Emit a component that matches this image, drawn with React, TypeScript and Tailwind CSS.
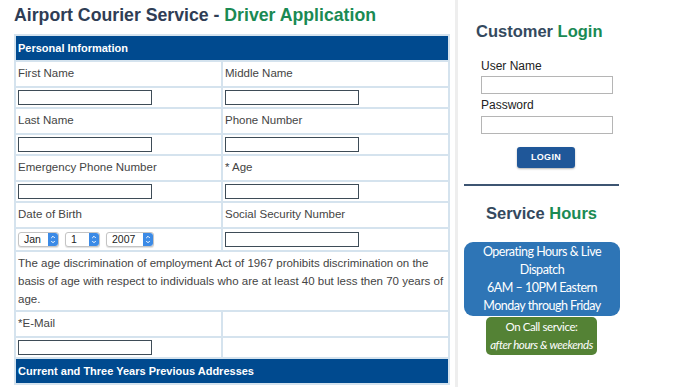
import { ChevronDown, ChevronUp } from 'lucide-react';

const cell = 'border-2 border-[#d5e3ee] px-[2px] align-middle';

function TextBox() {
  return <div className="w-[134px] h-[15px] border border-[#3e4c57] bg-white" />;
}

function Select({ value, width }: { value: string; width: string }) {
  return (
    <div className={`${width} h-[15px] flex items-center border border-[#c4c4c4] rounded-[3px] bg-white shadow-[0_1px_1px_rgba(0,0,0,0.12)]`}>
      <span className="flex-1 pl-[5px] text-[10.5px] leading-none text-[#222]">{value}</span>
      <span className="w-[10px] h-full rounded-r-[3px] bg-[#3b8ae6] flex flex-col items-center justify-center text-white">
        <ChevronUp size={6} strokeWidth={4} className="-mb-[1px]" />
        <ChevronDown size={6} strokeWidth={4} />
      </span>
    </div>
  );
}

function LabelRow({ left, right }: { left: string; right: string }) {
  return (
    <tr className="h-[26px]">
      <td className={cell}>{left}</td>
      <td className={cell}>{right}</td>
    </tr>
  );
}

function InputRow({ right = true }: { right?: boolean }) {
  return (
    <tr className="h-[21px]">
      <td className={cell}>
        <TextBox />
      </td>
      <td className={cell}>{right && <TextBox />}</td>
    </tr>
  );
}

function SectionHead({ title }: { title: string }) {
  return (
    <tr className="h-[26px]">
      <td colSpan={2} className="border-2 border-[#d5e3ee] bg-[#004a8f] px-[2px] text-white font-bold text-[11px]">
        {title}
      </td>
    </tr>
  );
}

export default function App() {
  return (
    <div className="w-[700px] h-[387px] overflow-hidden bg-white flex font-['Liberation_Sans',sans-serif]">
      <div className="w-[455px] pl-[14px] pt-[3px] shrink-0">
        <h1 className="text-[17.7px] font-bold leading-[24px] text-[#2f3d55]">
          Airport Courier Service - <span className="text-[#1a8a53]">Driver Application</span>
        </h1>
        <table className="mt-[7px] w-[436px] border-collapse text-[11.5px] text-[#444] table-fixed">
          <colgroup>
            <col className="w-[207px]" />
            <col />
          </colgroup>
          <tbody>
            <SectionHead title="Personal Information" />
            <LabelRow left="First Name" right="Middle Name" />
            <InputRow />
            <LabelRow left="Last Name" right="Phone Number" />
            <InputRow />
            <LabelRow left="Emergency Phone Number" right="* Age" />
            <InputRow />
            <LabelRow left="Date of Birth" right="Social Security Number" />
            <tr className="h-[23px]">
              <td className={cell}>
                <div className="flex gap-[6px]">
                  <Select value="Jan" width="w-[41px]" />
                  <Select value="1" width="w-[35px]" />
                  <Select value="2007" width="w-[48px]" />
                </div>
              </td>
              <td className={cell}>
                <TextBox />
              </td>
            </tr>
            <tr>
              <td colSpan={2} className={`${cell} leading-[18px] py-[2px]`}>
                The age discrimination of employment Act of 1967 prohibits discrimination on the basis of age with respect to
                individuals who are at least 40 but less then 70 years of age.
              </td>
            </tr>
            <LabelRow left="*E-Mail" right="" />
            <InputRow right={false} />
            <SectionHead title="Current and Three Years Previous Addresses" />
          </tbody>
        </table>
      </div>

      <div className="w-[3px] bg-[#eeeeee] shrink-0" />

      <div className="w-[170px] pl-[6px] flex flex-col">
        <h2 className="mt-[20px] pl-[12px] text-[16.5px] font-bold leading-[22px] text-[#34495e]">
          Customer <span className="text-[#1a8a53]">Login</span>
        </h2>
        <div className="pl-[17px] mt-[16px] text-[12px] text-[#222]">
          <div className="leading-[16px]">User Name</div>
          <div className="w-[132px] h-[18px] border border-[#b5b5b5] mt-[2px]" />
          <div className="leading-[16px] mt-[3px]">Password</div>
          <div className="w-[132px] h-[18px] border border-[#b5b5b5] mt-[3px]" />
        </div>
        <div className="w-[155px] pl-[53px] mt-[9px]">
          <button className="w-[58px] h-[21px] rounded-[3px] bg-[#1f5799] text-white text-[9px] font-bold tracking-[0.3px] shadow-[0_1px_2px_rgba(0,0,0,0.3)]">
            LOGIN
          </button>
        </div>
        <div className="w-[155px] h-[2px] bg-[#3d5572] mt-[16px]" />
        <h2 className="w-[155px] text-center mt-[16px] text-[16.5px] font-bold leading-[22px] text-[#34495e]">
          Service <span className="text-[#1a8a53]">Hours</span>
        </h2>
        <div className="w-[156px] mt-[18px] rounded-[9px] bg-[#2e75b6] text-white text-center text-[12.5px] leading-[18px] py-[1px] font-['Lato',sans-serif] tracking-[-0.5px]">
          Operating Hours &amp; Live
          <br />
          Dispatch
          <br />
          6AM – 10PM Eastern
          <br />
          Monday through Friday
        </div>
        <div className="w-[111px] ml-[22px] mt-[1px] rounded-[5px] bg-[#548235] text-white text-center text-[11.5px] leading-[18px] py-[1px] font-['Lato',sans-serif] whitespace-nowrap tracking-[-0.4px]">
          On Call service:
          <br />
          <i>after hours &amp; weekends</i>
        </div>
      </div>
    </div>
  );
}
